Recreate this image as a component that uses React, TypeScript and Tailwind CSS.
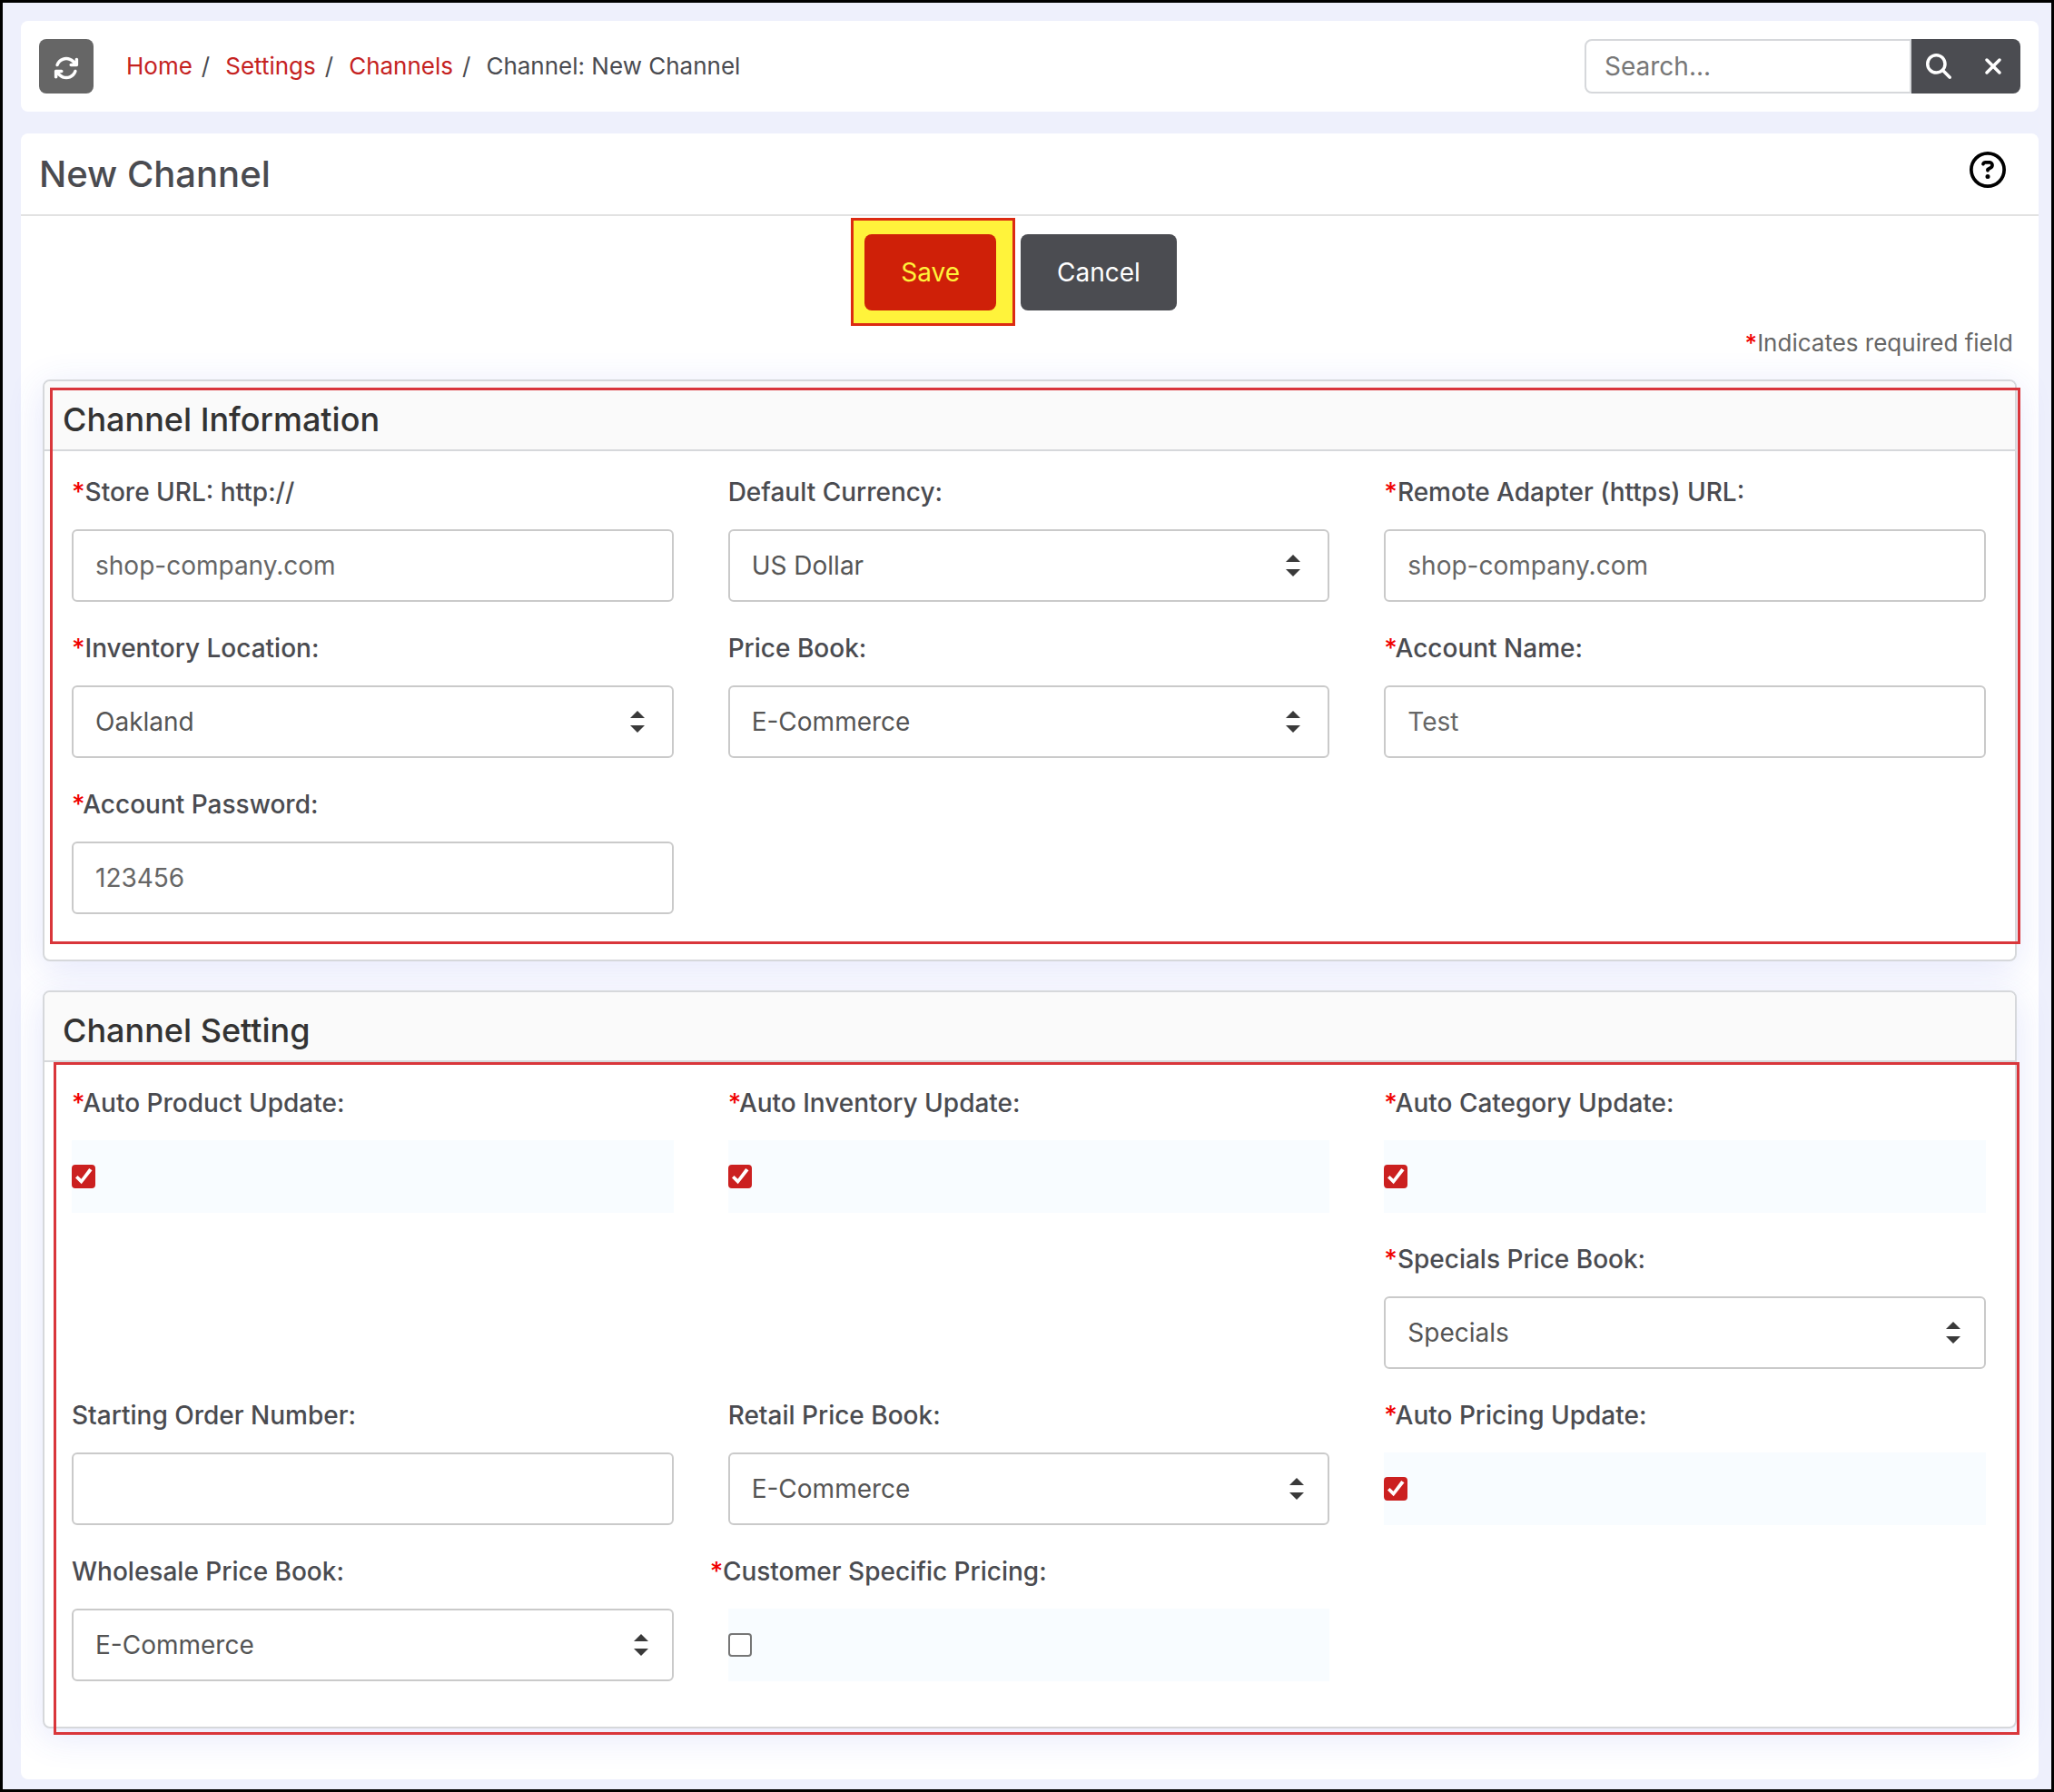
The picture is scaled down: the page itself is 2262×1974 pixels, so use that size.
import { useId } from "react"
import type { ReactNode } from "react"
import {
  FaArrowsRotate,
  FaMagnifyingGlass,
  FaRegCircleQuestion,
  FaXmark,
} from "react-icons/fa6"

const crumbs = ["Home", "Settings", "Channels"]
const currencies = ["US Dollar", "Euro", "Pound Sterling"]
const locations = ["Oakland", "San Jose"]
const priceBooks = ["E-Commerce", "Specials", "Wholesale"]

const Star = () => <span className="font-medium text-[#f00000]">*</span>

type FieldProps = {
  id: string
  label: string
  required?: boolean
  hanging?: boolean
  className?: string
  children: ReactNode
}

const Field = ({
  id,
  label,
  required,
  hanging,
  className = "",
  children,
}: FieldProps) => (
  <div className={`flex flex-col gap-[21px] ${className}`}>
    <label
      htmlFor={id}
      className={`text-[28px] leading-10 font-medium text-[#4a4b50] ${hanging ? "-ml-5" : ""}`}
    >
      {required && <Star />}
      {label}
    </label>
    {children}
  </div>
)

type InputFieldProps = {
  label: string
  required?: boolean
  value?: string
}

const TextField = ({ label, required, value = "" }: InputFieldProps) => {
  const id = useId()
  return (
    <Field id={id} label={label} required={required}>
      <input
        id={id}
        type="text"
        defaultValue={value}
        className="h-20 w-full rounded-md border-2 border-[#cacaca] bg-white px-6 text-[28px] text-[#666]"
      />
    </Field>
  )
}

type SelectFieldProps = InputFieldProps & {
  options: string[]
  className?: string
  arrow?: string
}

const SelectField = ({
  label,
  required,
  value,
  options,
  className,
  arrow = "right-7",
}: SelectFieldProps) => {
  const id = useId()
  return (
    <Field id={id} label={label} required={required} className={className}>
      <div className="relative">
        <select
          id={id}
          defaultValue={value}
          className="h-20 w-full appearance-none rounded-md border-2 border-[#cacaca] bg-white px-6 text-[28px] text-[#555]"
        >
          {options.map((option) => (
            <option key={option}>{option}</option>
          ))}
        </select>
        <svg
          viewBox="0 0 16 24"
          className={`pointer-events-none absolute top-7 h-6 w-4 text-[#3a3a3a] ${arrow}`}
          fill="currentColor"
          aria-hidden="true"
        >
          <path d="M8 0l8 8H0zM0 16h16l-8 8z" />
        </svg>
      </div>
    </Field>
  )
}

type CheckFieldProps = {
  label: string
  checked?: boolean
  hanging?: boolean
}

const CheckField = ({ label, checked, hanging }: CheckFieldProps) => {
  const id = useId()
  return (
    <Field id={id} label={label} required hanging={hanging}>
      <div className="flex h-20 items-center bg-[#f8fcff]">
        <div className="relative size-[26px]">
          <input
            id={id}
            type="checkbox"
            defaultChecked={checked}
            className="peer block size-full appearance-none rounded border-2 border-[#767676] bg-white checked:border-[#cb2020] checked:bg-[#cb2020]"
          />
          <svg
            viewBox="0 0 26 26"
            className="pointer-events-none absolute inset-0 hidden text-white peer-checked:block"
            fill="currentColor"
            aria-hidden="true"
          >
            <path d="M4 14.500L6.500 12l4 3.800L19.200 4l3.300 2.300L10.700 21.200z" />
          </svg>
        </div>
      </div>
    </Field>
  )
}

type PanelProps = {
  title: string
  outline: string
  children: ReactNode
}

const Panel = ({ title, outline, children }: PanelProps) => (
  <section className="relative rounded-lg border-2 border-[#d6d8db] bg-white shadow-[0_8px_40px_rgba(60,80,224,0.14)]">
    <h2 className="rounded-t-md border-b-2 border-[#d6d8db] bg-[#fafafa] px-5 pt-[9px] text-[36px] leading-[66px] font-medium text-[#333]">
      {title}
    </h2>
    <div className="grid grid-cols-3 gap-x-[60px] gap-y-[31px] pt-[25px] pr-8 pb-[50px] pl-[30px]">
      {children}
    </div>
    <div
      className={`pointer-events-none absolute border-3 border-[#d9363b] ${outline}`}
    />
  </section>
)

export default function App() {
  return (
    <div className="min-h-screen border-3 border-black bg-[#eef0fc] pt-5 pr-3.5 pb-[11px] pl-5 font-[Inter,sans-serif]">
      <header className="flex items-center justify-between rounded-lg bg-white p-5">
        <div className="flex items-center">
          <button
            type="button"
            aria-label="Refresh"
            className="flex size-[60px] items-center justify-center rounded-lg bg-[#666] pt-1 text-white"
          >
            <FaArrowsRotate className="size-7" />
          </button>
          <nav
            aria-label="Breadcrumb"
            className="ml-9 flex text-[26px] leading-10 text-[#4a4b50]"
          >
            {crumbs.map((crumb) => (
              <span key={crumb} className="mr-[17px]">
                <a href="#" className="mr-2.5 text-[#c5221f]">
                  {crumb}
                </a>
                /
              </span>
            ))}
            <span>Channel: New Channel</span>
          </nav>
        </div>
        <form className="flex h-[60px]">
          <input
            type="text"
            aria-label="Search"
            placeholder="Search..."
            className="w-[360px] rounded-l-lg border-2 border-[#d6d8db] px-5 text-[28px] placeholder:text-[#777]"
          />
          <button
            type="button"
            aria-label="Search"
            className="flex w-[60px] items-center justify-center bg-[#4b4c51] text-white"
          >
            <FaMagnifyingGlass className="size-7" />
          </button>
          <button
            type="button"
            aria-label="Clear"
            className="flex w-[60px] items-center justify-center rounded-r-lg bg-[#4b4c51] text-white"
          >
            <FaXmark className="size-7" />
          </button>
        </form>
      </header>

      <main className="mt-6 rounded-lg bg-white pb-14">
        <div className="flex h-[91px] items-center justify-between border-b-2 border-[#e2e2e2] pr-9 pl-5">
          <h1 className="text-[40px] leading-[48px] font-medium text-[#4a4b50]">
            New Channel
          </h1>
          <button type="button" aria-label="Help" className="mb-2.5 text-black">
            <FaRegCircleQuestion className="size-10" />
          </button>
        </div>

        <div className="flex justify-center gap-[27px] pt-5 pr-5">
          <div className="relative">
            <div className="absolute -top-[18px] -right-[21px] -bottom-[17px] -left-[15px] border-3 border-[#dc2b12] bg-[#fff33b]" />
            <button
              type="button"
              className="relative h-[84px] rounded-lg bg-[#cf2008] px-10 text-[28px] text-[#fff33b]"
            >
              Save
            </button>
          </div>
          <button
            type="button"
            className="h-[84px] rounded-lg bg-[#4b4c51] px-10 text-[28px] text-white"
          >
            Cancel
          </button>
        </div>

        <p className="pt-4 pr-7 text-right text-[26px] leading-10 text-[#666]">
          <Star />
          Indicates required field
        </p>

        <div className="mx-6 mt-5 flex flex-col gap-8">
          <Panel
            title="Channel Information"
            outline="top-[7px] -right-[6px] bottom-[17px] left-[6px]"
          >
            <TextField
              label="Store URL: http://"
              required
              value="shop-company.com"
            />
            <SelectField
              label="Default Currency:"
              value="US Dollar"
              options={currencies}
              arrow="right-8"
            />
            <TextField
              label="Remote Adapter (https) URL:"
              required
              value="shop-company.com"
            />
            <SelectField
              label="Inventory Location:"
              required
              value="Oakland"
              options={locations}
              arrow="right-8"
            />
            <SelectField
              label="Price Book:"
              value="E-Commerce"
              options={priceBooks}
              arrow="right-8"
            />
            <TextField label="Account Name:" required value="Test" />
            <TextField label="Account Password:" required value="123456" />
          </Panel>

          <Panel
            title="Channel Setting"
            outline="top-[77px] -right-[5px] -bottom-[9px] left-[10px]"
          >
            <CheckField label="Auto Product Update:" checked />
            <CheckField label="Auto Inventory Update:" checked />
            <CheckField label="Auto Category Update:" checked />
            <SelectField
              label="Specials Price Book:"
              required
              value="Specials"
              options={priceBooks}
              className="col-start-3"
            />
            <TextField label="Starting Order Number:" />
            <SelectField
              label="Retail Price Book:"
              value="E-Commerce"
              options={priceBooks}
            />
            <CheckField label="Auto Pricing Update:" checked />
            <SelectField
              label="Wholesale Price Book:"
              value="E-Commerce"
              options={priceBooks}
            />
            <CheckField label="Customer Specific Pricing:" hanging />
          </Panel>
        </div>
      </main>
    </div>
  )
}
